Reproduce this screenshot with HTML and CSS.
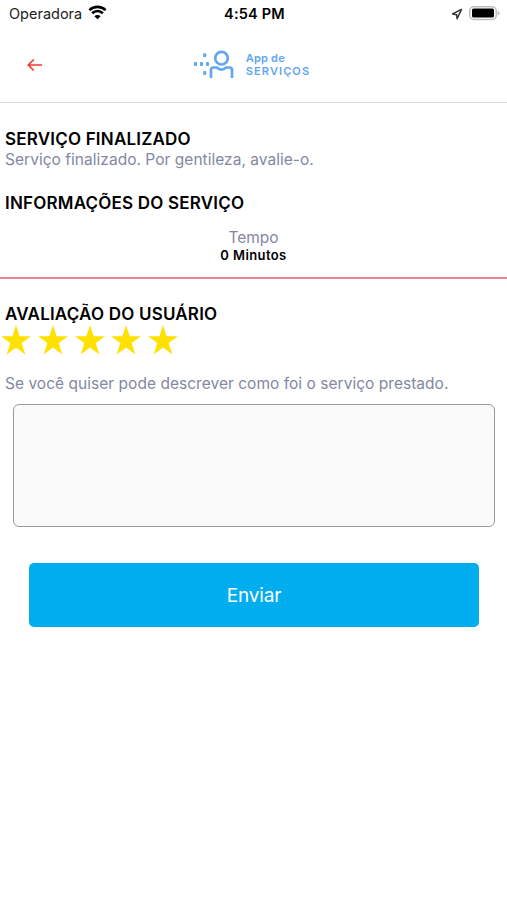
FILE: index.html
```html
<!DOCTYPE html>
<html lang="pt-BR">
<head>
  <meta charset="UTF-8">
  <meta name="viewport" content="width=device-width, initial-scale=1.0">
  <title>App de Serviços - Serviço Finalizado</title>
  <link rel="stylesheet" href="styles.css">
</head>
<body>
  <div class="status-bar">
    <div class="carrier">
      <span>Operadora</span>
      <svg class="wifi" width="19" height="15" viewBox="0 0 19 15">
        <path d="M1.4 5.1a11.7 11.7 0 0 1 16.2 0M4.2 8.2a7.6 7.6 0 0 1 10.6 0" fill="none" stroke="#000" stroke-width="2.6"/>
        <path d="M9.5 14.2L6.4 11.2a4.4 4.4 0 0 1 6.2 0z" fill="#000"/>
      </svg>
    </div>
    <div class="clock">4:54 PM</div>
    <div class="indicators">
      <svg width="12" height="12" viewBox="0 0 12 12">
        <path d="M10.5 1.4L1.6 5.9l4 .8.5 4z" fill="none" stroke="#333" stroke-width="1.5" stroke-linejoin="round"/>
      </svg>
      <svg width="31" height="15" viewBox="0 0 31 15">
        <rect x="0.8" y="0.8" width="26.4" height="12.6" rx="4" fill="#fff" stroke="#bdbdbd" stroke-width="1.5"/>
        <rect x="3" y="2.6" width="22" height="9" rx="1.5" fill="#000"/>
        <path d="M28.6 5v4.4q2-.6 2-2.2t-2-2.2z" fill="#bdbdbd"/>
      </svg>
    </div>
  </div>

  <header class="header">
    <a class="back" href="#" aria-label="Voltar">
      <svg width="16" height="14" viewBox="0 0 16 14">
        <path d="M15 7H1.5M6.8 1.5L1.3 7l5.5 5.5" fill="none" stroke="#f23b36" stroke-width="1.7"/>
      </svg>
    </a>
    <div class="logo">
      <svg width="42" height="32" viewBox="0 0 42 32">
        <g fill="#62a5f5">
          <rect x="9.2" y="4.2" width="3" height="4" rx="1"/>
          <rect x="0" y="13" width="3" height="4" rx="1"/>
          <rect x="6" y="13" width="3" height="4" rx="1"/>
          <rect x="12" y="13" width="3" height="4" rx="1"/>
          <rect x="9.2" y="22" width="3" height="4" rx="1"/>
        </g>
        <g fill="none" stroke="#62a5f5" stroke-width="2.7">
          <circle cx="27.5" cy="9.2" r="6.3"/>
          <path d="M17 29v-8q0-2.5 2.5-2.5h3.2q4.8 4.2 9.6 0h3.2q2.5 0 2.5 2.5v8"/>
        </g>
      </svg>
      <div class="logo-text">
        <span class="logo-top">App de</span>
        <span class="logo-bottom">SERVIÇOS</span>
      </div>
    </div>
  </header>

  <main>
    <section class="finished">
      <h2 class="title-finished">SERVIÇO FINALIZADO</h2>
      <p>Serviço finalizado. Por gentileza, avalie-o.</p>
    </section>

    <section class="info">
      <h2 class="title-info">INFORMAÇÕES DO SERVIÇO</h2>
      <div class="time">
        <div class="time-label">Tempo</div>
        <div class="time-value">0 Minutos</div>
      </div>
    </section>

    <section class="rating">
      <h2 class="title-rating">AVALIAÇÃO DO USUÁRIO</h2>
      <div class="stars">
        <svg viewBox="0 0 30 30"><path d="M15 0l3.6 11.2H30l-9.3 6.9L24.3 29.5 15 22.6 5.7 29.5 9.3 18.1 0 11.2h11.4z"/></svg>
        <svg viewBox="0 0 30 30"><path d="M15 0l3.6 11.2H30l-9.3 6.9L24.3 29.5 15 22.6 5.7 29.5 9.3 18.1 0 11.2h11.4z"/></svg>
        <svg viewBox="0 0 30 30"><path d="M15 0l3.6 11.2H30l-9.3 6.9L24.3 29.5 15 22.6 5.7 29.5 9.3 18.1 0 11.2h11.4z"/></svg>
        <svg viewBox="0 0 30 30"><path d="M15 0l3.6 11.2H30l-9.3 6.9L24.3 29.5 15 22.6 5.7 29.5 9.3 18.1 0 11.2h11.4z"/></svg>
        <svg viewBox="0 0 30 30"><path d="M15 0l3.6 11.2H30l-9.3 6.9L24.3 29.5 15 22.6 5.7 29.5 9.3 18.1 0 11.2h11.4z"/></svg>
      </div>
      <p class="hint">Se você quiser pode descrever como foi o serviço prestado.</p>
      <textarea class="comment" aria-label="Comentário"></textarea>
      <button class="btn-send" type="button">Enviar</button>
    </section>
  </main>
</body>
</html>
```
FILE: styles.css
```css
* {
  margin: 0;
  padding: 0;
  box-sizing: border-box;
}

body {
  font-family: Inter, Roboto, sans-serif;
  background: #fff;
  color: #000;
  min-height: 100vh;
}

.status-bar {
  display: grid;
  grid-template-columns: 1fr auto 1fr;
  align-items: center;
  height: 27px;
  padding: 0 7px 0 9px;
}

.carrier {
  display: flex;
  align-items: center;
  gap: 6px;
  font-size: 14.5px;
  color: #222;
}

.wifi {
  margin-top: -3px;
}

.clock {
  font-size: 14.5px;
  font-weight: 600;
  letter-spacing: 0.2px;
}

.indicators {
  display: flex;
  align-items: center;
  justify-content: flex-end;
  gap: 6px;
}

.header {
  display: grid;
  grid-template-columns: 1fr auto 1fr;
  align-items: center;
  height: 76px;
  padding: 0 30px 0 27px;
  border-bottom: 1.5px solid #d8d8d8;
}

.back {
  display: flex;
}

.logo {
  display: flex;
  align-items: center;
  gap: 10px;
}

.logo-text {
  display: flex;
  flex-direction: column;
  color: #62a5f5;
  font-size: 11px;
  font-weight: 600;
  line-height: 13px;
}

.logo-top {
  letter-spacing: 0.2px;
}

.logo-bottom {
  letter-spacing: 1.1px;
}

.title-finished,
.title-info,
.title-rating {
  font-size: 17px;
  font-weight: 600;
  line-height: 20px;
  letter-spacing: 0.2px;
}

p {
  font-size: 15.5px;
  line-height: 20px;
  letter-spacing: 0.03px;
  color: #8388a3;
}

.finished {
  padding: 26px 5px 0;
}

.finished p {
  margin-top: 1px;
}

.info {
  padding: 23px 0 14px;
  border-bottom: 2px solid #ee8396;
}

.title-info,
.title-rating {
  padding-left: 5px;
}

.time {
  margin-top: 16px;
  text-align: center;
}

.time-label {
  font-size: 15.5px;
  line-height: 18px;
  color: #8388a3;
}

.time-value {
  font-size: 13px;
  font-weight: 600;
  line-height: 16px;
  letter-spacing: 0.4px;
}

.rating {
  padding-top: 25px;
}

.stars {
  display: flex;
  gap: 6.8px;
  padding: 1px 0 0 1px;
}

.stars svg {
  width: 30px;
  height: 30px;
  fill: #ffe100;
}

.hint {
  margin-top: 19px;
  padding-left: 5px;
}

.comment {
  display: block;
  width: 482px;
  height: 123px;
  margin: 10px 0 0 13px;
  border: 1.5px solid #9b9b9b;
  border-radius: 6px;
  background: #fafafa;
  resize: none;
}

.btn-send {
  display: block;
  width: 450px;
  height: 64px;
  margin: 36px 0 0 29px;
  border: none;
  border-radius: 5px;
  background: #00aeef;
  color: #fff;
  font-family: inherit;
  font-size: 19px;
  letter-spacing: -0.2px;
}
```
